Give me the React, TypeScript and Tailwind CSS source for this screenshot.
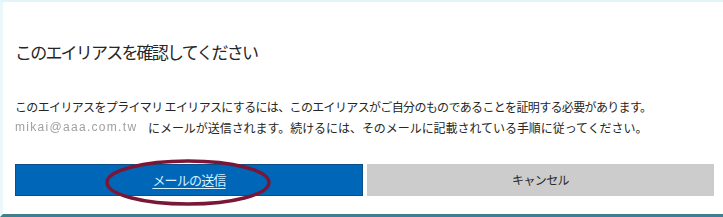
import React from 'react';

const jp = { fontFamily: '"Noto Sans CJK JP", "Noto Sans", sans-serif' };

const App = () => {
  return (
    <div
      className="relative w-[723px] h-[217px] overflow-hidden bg-white border-l-[3px] border-t-[2px] border-b-[3px] border-l-[#eaf7fb] border-t-[#e3f4fa] border-b-[#3f7f8f]"
      style={jp}
    >
      <div className="flex flex-col pl-[12px] pr-[6px] pt-[38px]">
        <h1 className="text-[17px] leading-[24px] tracking-[-1.8px] text-[#262626] font-normal">
          このエイリアスを確認してください
        </h1>

        <div className="mt-[32px] text-[12px] leading-[21px] text-[#262626]">
          <p className="tracking-[-0.65px]">
            このエイリアスをプライマリ エイリアスにするには、このエイリアスがご自分のものであることを証明する必要があります。
          </p>
          <p className="flex items-center tracking-[-0.05px]">
            <span
              className="w-[133px] text-[#a0a0a0] blur-[0.7px] tracking-[1.3px]"
              style={{ fontFamily: '"Liberation Sans", sans-serif' }}
            >
              mikai@aaa.com.tw
            </span>
            <span>にメールが送信されます。続けるには、そのメールに記載されている手順に従ってください。</span>
          </p>
        </div>

        <div className="mt-[26px] flex gap-[4px] pr-[3px]">
          <button className="w-[348px] h-[32px] bg-[#0067b8] border border-[#0b4f86] flex items-center justify-center">
            <span className="text-[13px] tracking-[-0.8px] text-[#d6f0ff] underline underline-offset-[3px]">
              メールの送信
            </span>
          </button>
          <button className="flex-1 h-[32px] bg-[#cccccc] flex items-center justify-center">
            <span className="text-[12px] tracking-[-0.6px] text-[#2b2b2b]">キャンセル</span>
          </button>
        </div>
      </div>

      <svg className="absolute left-[101px] top-[156px]" width="170" height="50" viewBox="0 0 170 50">
        <ellipse cx="84" cy="24.5" rx="81" ry="21.5" fill="none" stroke="#7a1636" strokeWidth="3.5" />
      </svg>
    </div>
  );
};

export default App;
